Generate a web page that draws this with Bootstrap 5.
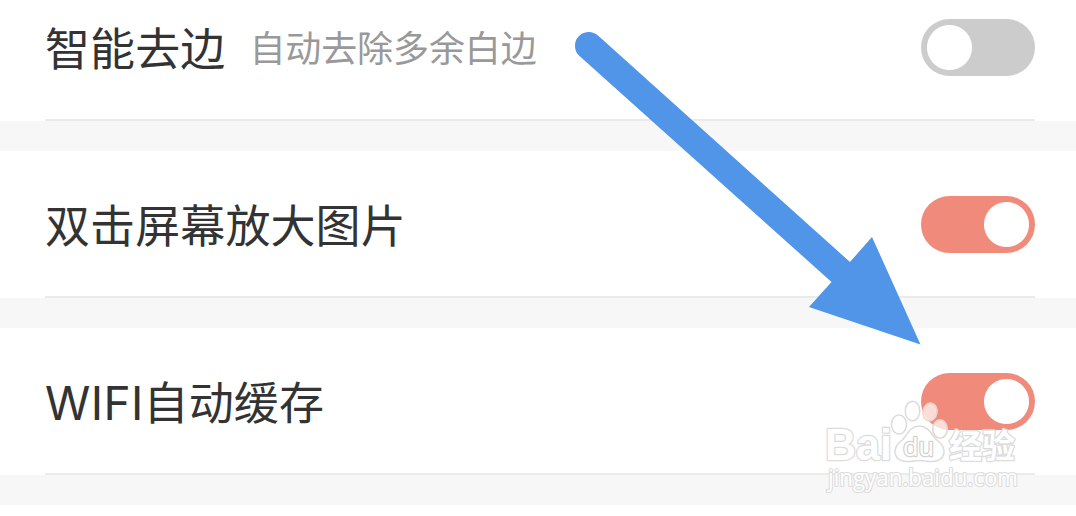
<!DOCTYPE html>
<html lang="zh-CN">
<head>
  <meta charset="UTF-8">
  <meta name="viewport" content="width=device-width, initial-scale=1.0">
  <title>阅读设置</title>
  <link href="https://cdn.jsdelivr.net/npm/bootstrap@5.3.3/dist/css/bootstrap.min.css" rel="stylesheet">
  <style>
    body {
      background-color: #fff;
      color: #333;
      font-family: "Noto Sans CJK SC", sans-serif;
      overflow: hidden;
    }
    .setting-block {
      padding: 0 41px 0 45px;
      border-bottom: 30px solid #f7f7f7;
    }
    .setting-row {
      height: 147px;
      border-bottom: 2px solid #ebebeb;
      padding-top: 2px;
    }
    .setting-first { margin-top: -26px; }
    .setting-title {
      font-size: 45px;
      line-height: 57px;
      letter-spacing: .1px;
      padding-bottom: 2px;
      white-space: nowrap;
    }
    .setting-latin {
      font-family: Inter, sans-serif;
      font-size: 46px;
      line-height: 1;
      letter-spacing: .35px;
    }
    .setting-hint {
      font-size: 36px;
      line-height: 57px;
      color: #999;
      padding-bottom: 2px;
      margin-left: 24px;
      letter-spacing: -0.1px;
      white-space: nowrap;
    }
    .form-switch .setting-toggle {
      width: 114px;
      height: 57px;
      margin: 0;
      border: 0;
      border-radius: 29px;
      background-color: #ccc;
      background-image: radial-gradient(circle at center, #fff 22px, transparent 23px);
      background-size: 57px 57px;
      background-position: left center;
      background-repeat: no-repeat;
    }
    .form-switch .setting-toggle:checked {
      background-color: #f08b7b;
      background-image: radial-gradient(circle at center, #fff 22px, transparent 23px);
      background-position: right center;
    }
    .overlay-art { pointer-events: none; }
  </style>
</head>
<body>

<main>
  <section class="setting-block setting-first">
    <div class="setting-row d-flex align-items-center justify-content-between">
      <div class="d-flex align-items-center">
        <span class="setting-title">智能去边</span>
        <span class="setting-hint">自动去除多余白边</span>
      </div>
      <div class="form-check form-switch d-flex p-0 m-0">
        <input class="form-check-input setting-toggle" type="checkbox" role="switch" aria-label="智能去边">
      </div>
    </div>
  </section>

  <section class="setting-block">
    <div class="setting-row d-flex align-items-center justify-content-between">
      <span class="setting-title">双击屏幕放大图片</span>
      <div class="form-check form-switch d-flex p-0 m-0">
        <input class="form-check-input setting-toggle" type="checkbox" role="switch" aria-label="双击屏幕放大图片" checked>
      </div>
    </div>
  </section>

  <section class="setting-block">
    <div class="setting-row d-flex align-items-center justify-content-between">
      <span class="setting-title"><span class="setting-latin">WIFI</span>自动缓存</span>
      <div class="form-check form-switch d-flex p-0 m-0">
        <input class="form-check-input setting-toggle" type="checkbox" role="switch" aria-label="WIFI自动缓存" checked>
      </div>
    </div>
  </section>
</main>

<!-- arrow and watermark lie over the list -->
<svg class="overlay-art position-absolute top-0 start-0" width="1076" height="516" viewBox="0 0 1076 516">
  <path fill="#5195e9" d="M598 35.5 850 262 872 237 920.5 344.5 809 307 831.5 282 579.5 56A13.5 13.5 0 0 1 598 35.5Z"/>

  <g fill="#fff" fill-opacity=".7" stroke="#dcdcdc" stroke-width="1.5" stroke-linejoin="round">
    <ellipse cx="899" cy="424.500" rx="7.500" ry="9.500"/>
    <ellipse cx="912.500" cy="411" rx="7.300" ry="9.800"/>
    <ellipse cx="930" cy="412" rx="7" ry="9" stroke="#f2d2cd" transform="rotate(10 930 412)"/>
    <ellipse cx="940" cy="429" rx="7.300" ry="9.300" stroke="#e6d3d0"/>
    <path d="M919 426C909 426 907 437 901 441C891 449 894 461.500 907 461.500C913 461.500 915 460.500 919 460.500C924 460.500 926 461.500 932 461.500C945 461.500 948 449 938 441C932 437 930 426 919 426Z"/>
  </g>
  <g fill="#fff" stroke="#dcdcdc" stroke-width="2.600" stroke-linejoin="round" paint-order="stroke">
    <text x="825" y="460" font-family="Liberation Sans, sans-serif" font-weight="700" font-size="44" textLength="67" lengthAdjust="spacingAndGlyphs">Bai</text>
    <text x="903" y="456" font-family="Open Sans, sans-serif" font-size="25" stroke="#d2d2d2" textLength="31" lengthAdjust="spacingAndGlyphs">du</text>
    <text x="949" y="458" font-family="Noto Sans CJK SC, sans-serif" font-weight="700" font-size="33" textLength="66" lengthAdjust="spacingAndGlyphs">经验</text>
    <text x="828" y="486" font-family="Open Sans, sans-serif" font-size="23" stroke-width="2.200" textLength="190" lengthAdjust="spacingAndGlyphs">jingyan.baidu.com</text>
  </g>
</svg>

<script src="https://cdn.jsdelivr.net/npm/bootstrap@5.3.3/dist/js/bootstrap.bundle.min.js"></script>
</body>
</html>
